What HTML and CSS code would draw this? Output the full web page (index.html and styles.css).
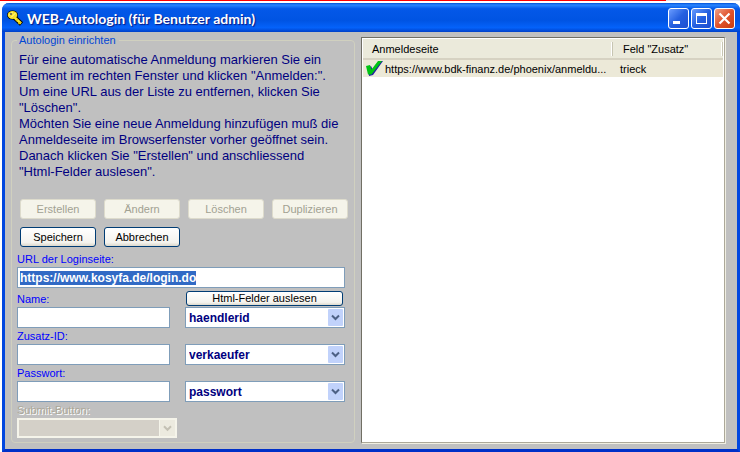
FILE: index.html
```html
<!DOCTYPE html>
<html lang="de">
<head>
    <meta charset="UTF-8">
    <meta name="viewport" content="width=device-width, initial-scale=1.0">
    <title>WEB-Autologin</title>
    <link rel="stylesheet" href="styles.css">
</head>
<body>
    <div class="window">
        <header class="titlebar">
            <svg class="key-icon" viewBox="0 0 17 17">
                <path d="M6 6l8.500 8" stroke="#000" stroke-width="4.6"/>
                <path d="M9 11l2-2M11.500 14l2-2" stroke="#000" stroke-width="3.2"/>
                <ellipse cx="5.500" cy="5" rx="5.500" ry="4.600" fill="#000"/>
                <path d="M6 6l8 7.500" stroke="#ffe92c" stroke-width="2.6"/>
                <path d="M9 11l2-2M11.500 14l2-2" stroke="#e8c800" stroke-width="1.4"/>
                <ellipse cx="5.500" cy="5" rx="4.800" ry="4" fill="#f6e02a"/>
                <path d="M2 5.500l3.500-3.500M4 7.500l4.500-4.500" stroke="#fffbb0"/>
                <circle cx="4" cy="4" r="0.900" fill="#444"/>
            </svg>
            <h1>WEB-Autologin (für Benutzer admin)</h1>
            <div class="window-buttons">
                <button type="button" aria-label="Minimieren">
                    <svg viewBox="0 0 19 19"><path d="M4 12h7v3H4z" fill="#fff"/></svg>
                </button>
                <button type="button" aria-label="Maximieren">
                    <svg viewBox="0 0 19 19"><path d="M4 4h11v11H4z M5 7v7h9V7z" fill="#fff" fill-rule="evenodd"/></svg>
                </button>
                <button type="button" class="close" aria-label="Schließen">
                    <svg viewBox="0 0 19 19"><path d="M4.500 4.500l10 10M14.500 4.500l-10 10" stroke="#fff" stroke-width="2.2"/></svg>
                </button>
            </div>
        </header>

        <main class="content">
            <fieldset class="setup">
                <legend>Autologin einrichten</legend>
                <p class="help">
                    Für eine automatische Anmeldung markieren Sie ein<br>
                    Element im rechten Fenster und klicken "Anmelden:".<br>
                    Um eine URL aus der Liste zu entfernen, klicken Sie<br>
                    "Löschen".<br>
                    Möchten Sie eine neue Anmeldung hinzufügen muß die<br>
                    Anmeldeseite im Browserfenster vorher geöffnet sein.<br>
                    Danach klicken Sie "Erstellen" und anschliessend<br>
                    "Html-Felder auslesen".
                </p>

                <div class="actions">
                    <button type="button" class="btn" disabled>Erstellen</button>
                    <button type="button" class="btn" disabled>Ändern</button>
                    <button type="button" class="btn" disabled>Löschen</button>
                    <button type="button" class="btn" disabled>Duplizieren</button>
                    <button type="button" class="btn">Speichern</button>
                    <button type="button" class="btn">Abbrechen</button>
                </div>

                <div class="url-field">
                    <label for="url">URL der Loginseite:</label>
                    <input type="text" id="url" value="https://www.kosyfa.de/login.do" spellcheck="false">
                </div>

                <div class="fields">
                    <label for="name">Name:</label>
                    <button type="button" class="btn read-fields">Html-Felder auslesen</button>
                    <input type="text" id="name">
                    <select aria-label="Feld für Name"><option>haendlerid</option></select>

                    <label for="extra" class="wide">Zusatz-ID:</label>
                    <input type="text" id="extra">
                    <select aria-label="Feld für Zusatz-ID"><option>verkaeufer</option></select>

                    <label for="password" class="wide">Passwort:</label>
                    <input type="password" id="password">
                    <select aria-label="Feld für Passwort"><option>passwort</option></select>

                    <label for="submit" class="wide disabled">Submit-Button:</label>
                    <select id="submit" class="submit" disabled><option></option></select>
                </div>
            </fieldset>

            <div class="list">
                <table>
                    <thead>
                        <tr>
                            <th>Anmeldeseite</th>
                            <th class="extra-col">Feld "Zusatz"</th>
                        </tr>
                    </thead>
                    <tbody>
                        <tr>
                            <td>
                                <div class="site">
                                    <svg class="check" viewBox="0 0 17 17">
                                        <path d="M2 8l3-2 2 4L14 1h3L7 15l-4 1z" fill="#2020a0"/>
                                        <path d="M0 6l4-1 1.500 4.500L12 1h4L5.500 14.500H2z" fill="#00c414"/>
                                    </svg>
                                    <span>https://www.bdk-finanz.de/phoenix/anmeldu...</span>
                                </div>
                            </td>
                            <td>trieck</td>
                        </tr>
                    </tbody>
                </table>
            </div>
        </main>
    </div>

    <script>
        // Preselect the URL so it can be overwritten right away
        document.getElementById("url").select();
    </script>
</body>
</html>
```
FILE: styles.css
```css
* {
    box-sizing: border-box;
}

body {
    margin: 0;
    padding: 3px 0 1px 2px;
    min-height: 100vh;
    display: flex;
    font-family: "Liberation Sans", Arial, sans-serif;
    font-size: 11px;
    background: linear-gradient(to right, #ff0000 90%, #e4e4ee 90%) no-repeat top / 100% 1px #fff;
}

button, input, select {
    font: inherit;
    margin: 0;
}

.window {
    flex: 1;
    display: flex;
    flex-direction: column;
    background-color: #c0c0c0;
    border: 3px solid #0046e0;
    border-top: none;
    border-bottom-color: #0030c8;
    border-radius: 7px 7px 0 0;
}

.titlebar {
    display: flex;
    align-items: center;
    height: 29px;
    margin: 0 -3px;
    padding: 2px 5px 0;
    background: linear-gradient(#0050d8 0, #2a86ff 7%, #0458e8 20%, #0054e3 60%, #0462fa 85%, #0040c8 100%);
    border-radius: 7px 7px 0 0;
}

.key-icon {
    width: 17px;
    height: 17px;
    margin-right: 3px;
}

.titlebar h1 {
    flex: 1;
    margin: 0;
    color: #fff;
    font-family: Lato, "Open Sans", sans-serif;
    font-size: 14px;
    font-weight: bold;
    text-shadow: 1px 1px 1px #0a1883;
    white-space: nowrap;
}

.window-buttons {
    display: flex;
    gap: 2px;
}

.window-buttons button {
    width: 21px;
    height: 21px;
    padding: 0;
    border: 1px solid #fff;
    border-radius: 3px;
    background: linear-gradient(135deg, #6a9cff, #2560e0 50%, #1d4fd0);
}

.window-buttons .close {
    background: linear-gradient(135deg, #f0a088, #e0532c 50%, #c83c10);
}

.window-buttons svg {
    display: block;
    width: 19px;
    height: 19px;
}

.content {
    flex: 1;
    display: flex;
    gap: 6px;
    padding: 2px 12px 6px 6px;
}

.setup {
    flex: none;
    width: 344px;
    margin: 0;
    padding: 5px 6px 4px 5px;
    border: 1px solid #d0d0bf;
    border-radius: 4px;
}

.setup legend {
    padding: 0 3px 0 2px;
    line-height: 13px;
    color: #0046d5;
}

.help {
    margin: 0 0 19px 2px;
    color: #000080;
    font-size: 13px;
    line-height: 16px;
    white-space: nowrap;
}

.actions {
    display: grid;
    grid-template-columns: repeat(4, 76px);
    gap: 8px;
    padding-left: 3px;
}

.btn {
    height: 20px;
    padding: 0;
    color: #000;
    border: 1px solid #003c74;
    border-radius: 3px;
    background: linear-gradient(#fff, #f4f3ee 80%, #dcd8cc);
}

.btn:disabled {
    color: #a1a192;
    border-color: #dddbcc;
    background: #f5f4ea;
}

label {
    color: #0000ff;
    line-height: 16px;
}

.url-field {
    display: flex;
    flex-direction: column;
    margin: 4px 3px 3px 0;
}

.setup input,
.setup select {
    width: 100%;
    height: 21px;
    padding: 0 2px;
    color: #000080;
    font-size: 12px;
    font-weight: bold;
    border: 1px solid #7f9db9;
    border-radius: 0;
    outline: none;
    background-color: #fff;
}

.setup input::selection {
    color: #fff;
    background-color: #316ac5;
}

.setup select {
    appearance: none;
    padding-left: 3px;
    background-image: url("data:image/svg+xml,%3Csvg xmlns='http://www.w3.org/2000/svg' width='15' height='17'%3E%3Crect width='15' height='17' rx='1' fill='%23c1d2fb'/%3E%3Cpath d='M4 6.500l3.500 3.500 3.500-3.500' fill='none' stroke='%234d6185' stroke-width='2'/%3E%3C/svg%3E");
    background-repeat: no-repeat;
    background-position: right 1px center;
}

.fields {
    display: grid;
    grid-template-columns: 153px 160px;
    column-gap: 15px;
}

.fields .wide {
    grid-column: 1 / -1;
}

.read-fields {
    height: 15px;
    margin: 0 2px 0 1px;
    line-height: 13px;
}

.fields .disabled {
    color: #aca899;
    text-shadow: 1px 1px 0 #fff;
}

.fields .submit {
    grid-column: 1 / -1;
    width: 160px;
    height: 20px;
    border: 2px solid #f5f4ea;
    background-color: #d4d0c8;
    background-image: url("data:image/svg+xml,%3Csvg xmlns='http://www.w3.org/2000/svg' width='16' height='17'%3E%3Cpath d='M0 0h1v17H0z' fill='%23f5f4ea'/%3E%3Crect x='1' width='15' height='17' fill='%23eceadf'/%3E%3Cpath d='M5 6.500l3.500 3.500 3.500-3.500' fill='none' stroke='%23c4c1b4' stroke-width='2'/%3E%3C/svg%3E");
    background-position: right center;
    opacity: 1;
}

.list {
    flex: 1;
    min-width: 0;
    margin-top: 3px;
    padding: 1px;
    background-color: #fff;
    border: 1px solid #716f64;
    border-right-color: #aca899;
    border-bottom-color: #aca899;
    box-shadow: 1px 1px 0 #f1efe2;
}

.list table {
    width: 100%;
    table-layout: fixed;
    border-collapse: collapse;
}

.list th {
    height: 20px;
    padding: 1px 10px 0 9px;
    text-align: left;
    font-weight: normal;
    background: linear-gradient(to left, #c7c5b2 1px, #fff 1px, #fff 2px, transparent 2px) no-repeat right center / 2px 14px #ebeadb;
    border-bottom: 2px solid #d6d2c2;
}

.list .extra-col {
    width: 110px;
    padding-left: 10px;
}

.list td {
    height: 18px;
    padding: 0 7px;
    background-color: #ece9d8;
}

.list td:first-child {
    padding: 0 0 0 3px;
}

.site {
    display: flex;
    align-items: center;
    gap: 2px;
    white-space: nowrap;
}

.check {
    flex: none;
    width: 17px;
    height: 17px;
}
```
